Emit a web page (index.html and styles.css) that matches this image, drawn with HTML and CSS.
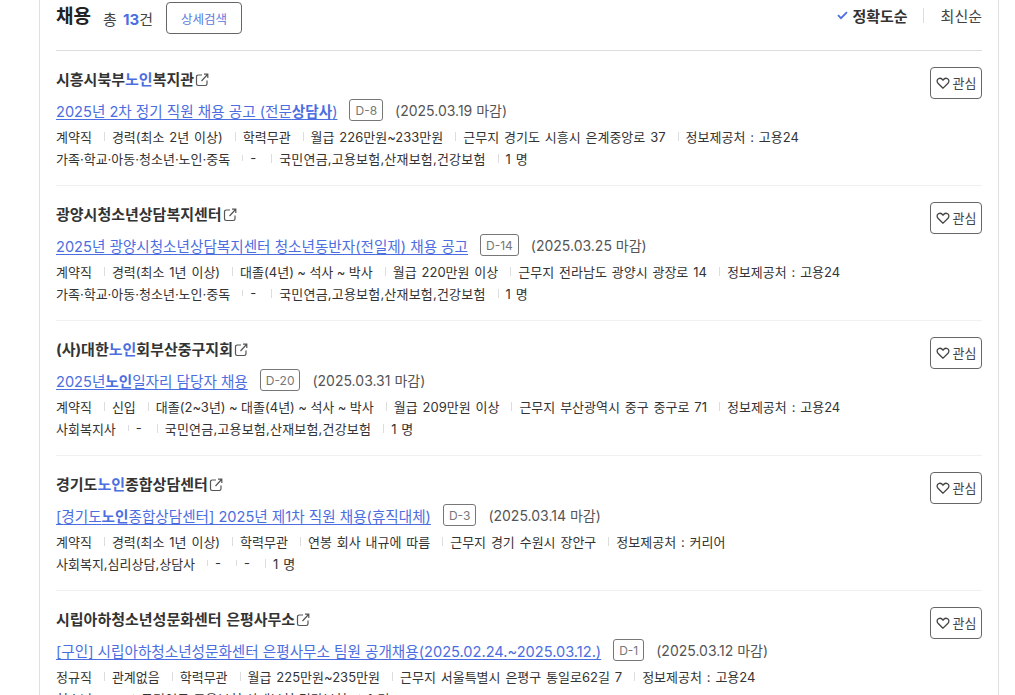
FILE: index.html
```html
<!DOCTYPE html>
<html lang="ko">
<head>
<meta charset="utf-8">
<title>채용</title>
<link rel="stylesheet" href="styles.css">
</head>
<body>
<svg class="defs" width="0" height="0" aria-hidden="true">
  <symbol id="ext" viewBox="0 0 14 14"><path d="M7 2H3.2A1.7 1.7 0 0 0 1.5 3.7v7.1a1.7 1.7 0 0 0 1.7 1.7h7.1a1.7 1.7 0 0 0 1.7-1.7V7.5" fill="none" stroke="currentColor" stroke-width="1.2"/><path d="M6.5 8 12.5 1.5M9 1.2h3.8V5" fill="none" stroke="currentColor" stroke-width="1.2"/></symbol>
  <symbol id="heart" viewBox="0 0 14 14"><path d="M7 12.2 2 7.3C.6 5.8.9 3.6 2.4 2.7c1.6-.9 3.4-.3 4.6 1.4 1.2-1.7 3-2.3 4.6-1.4 1.5.9 1.8 3.1.4 4.6z" fill="none" stroke="currentColor" stroke-width="1.3"/></symbol>
</svg>
<main class="panel">
  <header class="head">
    <div class="head-left">
      <h1 class="title">채용</h1>
      <span class="count">총 <b>13</b>건</span>
      <button class="search-btn">상세검색</button>
    </div>
    <div class="sort">
      <svg class="check" width="11" height="9" viewBox="0 0 11 9"><path d="M1 4.2 4 7.2 10 1.2" fill="none" stroke="#4c6ee0" stroke-width="1.8"/></svg>
      <span class="sort-on">정확도순</span>
      <span class="sort-off">최신순</span>
    </div>
  </header>

  <article class="job">
    <div class="job-main">
      <div class="org">시흥시북부<em>노인</em>복지관<svg class="ext"><use href="#ext"/></svg></div>
      <div class="line">
        <a class="job-link">2025년 2차 정기 직원 채용 공고 (전문<b>상담사</b>)</a>
        <span class="dday">D-8</span><span class="deadline">(2025.03.19 마감)</span>
      </div>
      <ul class="meta"><li>계약직</li><li>경력(최소 2년 이상)</li><li>학력무관</li><li>월급 226만원~233만원</li><li>근무지 경기도 시흥시 은계중앙로 37</li><li>정보제공처 : 고용24</li></ul>
      <ul class="meta"><li>가족·학교·아동·청소년·노인·중독</li><li class="dash">-</li><li class="benefits">국민연금,고용보험,산재보험,건강보험</li><li>1 명</li></ul>
    </div>
    <button class="fav"><svg class="heart"><use href="#heart"/></svg>관심</button>
  </article>

  <article class="job">
    <div class="job-main">
      <div class="org">광양시청소년상담복지센터<svg class="ext"><use href="#ext"/></svg></div>
      <div class="line">
        <a class="job-link">2025년 광양시청소년상담복지센터 청소년동반자(전일제) 채용 공고</a>
        <span class="dday">D-14</span><span class="deadline">(2025.03.25 마감)</span>
      </div>
      <ul class="meta"><li>계약직</li><li>경력(최소 1년 이상)</li><li class="edu">대졸(4년) ~ 석사 ~ 박사</li><li>월급 220만원 이상</li><li>근무지 전라남도 광양시 광장로 14</li><li>정보제공처 : 고용24</li></ul>
      <ul class="meta"><li>가족·학교·아동·청소년·노인·중독</li><li class="dash">-</li><li class="benefits">국민연금,고용보험,산재보험,건강보험</li><li>1 명</li></ul>
    </div>
    <button class="fav"><svg class="heart"><use href="#heart"/></svg>관심</button>
  </article>

  <article class="job">
    <div class="job-main">
      <div class="org">(사)대한<em>노인</em>회부산중구지회<svg class="ext"><use href="#ext"/></svg></div>
      <div class="line">
        <a class="job-link">2025년<b>노인</b>일자리 담당자 채용</a>
        <span class="dday">D-20</span><span class="deadline">(2025.03.31 마감)</span>
      </div>
      <ul class="meta"><li>계약직</li><li>신입</li><li class="edu">대졸(2~3년) ~ 대졸(4년) ~ 석사 ~ 박사</li><li>월급 209만원 이상</li><li>근무지 부산광역시 중구 중구로 71</li><li>정보제공처 : 고용24</li></ul>
      <ul class="meta"><li>사회복지사</li><li class="dash">-</li><li class="benefits">국민연금,고용보험,산재보험,건강보험</li><li>1 명</li></ul>
    </div>
    <button class="fav"><svg class="heart"><use href="#heart"/></svg>관심</button>
  </article>

  <article class="job">
    <div class="job-main">
      <div class="org">경기도<em>노인</em>종합상담센터<svg class="ext"><use href="#ext"/></svg></div>
      <div class="line">
        <a class="job-link">[경기도<b>노인</b>종합상담센터] 2025년 제1차 직원 채용(휴직대체)</a>
        <span class="dday">D-3</span><span class="deadline">(2025.03.14 마감)</span>
      </div>
      <ul class="meta"><li>계약직</li><li>경력(최소 1년 이상)</li><li>학력무관</li><li>연봉 회사 내규에 따름</li><li>근무지 경기 수원시 장안구</li><li>정보제공처 : 커리어</li></ul>
      <ul class="meta"><li>사회복지,심리상담,상담사</li><li class="dash">-</li><li class="dash">-</li><li>1 명</li></ul>
    </div>
    <button class="fav"><svg class="heart"><use href="#heart"/></svg>관심</button>
  </article>

  <article class="job">
    <div class="job-main">
      <div class="org">시립아하청소년성문화센터 은평사무소<svg class="ext"><use href="#ext"/></svg></div>
      <div class="line">
        <a class="job-link">[구인] 시립아하청소년성문화센터 은평사무소 팀원 공개채용(2025.02.24.~2025.03.12.)</a>
        <span class="dday">D-1</span><span class="deadline">(2025.03.12 마감)</span>
      </div>
      <ul class="meta"><li>정규직</li><li>관계없음</li><li>학력무관</li><li>월급 225만원~235만원</li><li>근무지 서울특별시 은평구 통일로62길 7</li><li>정보제공처 : 고용24</li></ul>
      <ul class="meta"><li>청소년</li><li class="dash">-</li><li class="benefits">국민연금,고용보험,산재보험,건강보험</li><li>1 명</li></ul>
    </div>
    <button class="fav"><svg class="heart"><use href="#heart"/></svg>관심</button>
  </article>
</main>
</body>
</html>
```
FILE: styles.css
```css
* { box-sizing: border-box; }
html, body { margin: 0; height: 695px; overflow: hidden; background: #fff; }
body {
  font-family: Inter, "Noto Sans CJK KR", sans-serif;
  color: #333;
  font-size: 13px;
}
.defs { position: absolute; }
ul { list-style: none; margin: 0; padding: 0; }

.panel {
  width: 960px;
  margin-left: 39px;
  padding: 0 16px;
  height: 695px;
  border-left: 1px solid #e0e0e0;
  border-right: 1px solid #e0e0e0;
}

.head {
  height: 51px;
  display: flex;
  justify-content: space-between;
  align-items: flex-start;
  border-bottom: 1px solid #ddd;
}
.head-left { display: flex; align-items: center; height: 36px; }
.title { margin: 0 0 2px; font-size: 19px; font-weight: 700; color: #222; line-height: 30px; }
.count { margin-left: 12px; font-size: 15px; word-spacing: 2px; color: #444; }
.count b { color: #4c6ee0; font-weight: 700; }
.search-btn {
  margin-left: 13px;
  width: 76px;
  height: 32px;
  border: 1px solid #666;
  border-radius: 4px;
  background: #fff;
  color: #5a78e0;
  font: 12.5px Inter, "Noto Sans CJK KR", sans-serif;
  padding: 0;
}
.sort { display: flex; align-items: center; height: 30px; font-size: 15px; }
.check { margin-right: 4px; }
.sort-on { font-weight: 700; color: #333; }
.sort-off { margin-left: 15px; padding-left: 18px; color: #444; position: relative; }
.sort-off::before {
  content: ""; position: absolute; left: 0; top: 3px; bottom: 3px; width: 1px; background: #ddd;
}

.job {
  height: 135px;
  padding-top: 16px;
  display: flex;
  justify-content: space-between;
  align-items: flex-start;
  border-bottom: 1px solid #f0f0f0;
}
.job-main { min-width: 0; }
.org { font-size: 15px; font-weight: 700; color: #333; height: 26px; line-height: 26px; display: flex; align-items: center; word-spacing: 1px; }
.org em { font-style: normal; color: #4c6ee0; }
.ext { width: 14px; height: 14px; margin-left: 1px; color: #555; }

.line { display: flex; align-items: center; height: 30px; margin-top: 2px; white-space: nowrap; }
.job-link { font-size: 14.6px; color: #4c6ee0; text-decoration: underline; text-underline-offset: 2px; }
.job-link b { font-weight: 700; }
.dday {
  margin-left: 12px;
  height: 22px;
  padding: 0 5px;
  display: inline-flex;
  align-items: center;
  border: 1px solid #777;
  border-radius: 3px;
  font-size: 12px;
  color: #777;
}
.deadline { margin-left: 12px; font-size: 14px; color: #555; }

.meta { display: flex; align-items: center; height: 22px; white-space: nowrap; font-size: 13px; word-spacing: 1.2px; color: #333; }
.meta li + li { margin-left: 12px; padding-left: 8px; position: relative; }
.meta li + li::before {
  content: ""; position: absolute; left: 0; top: 5px; bottom: 5px; width: 1px; background: #ddd;
}
.meta li.dash { padding-right: 3px; }
.meta li.edu { word-spacing: -0.2px; }
.meta li.benefits { letter-spacing: 0.2px; }

.fav {
  flex: none;
  width: 52px;
  height: 32px;
  display: flex;
  align-items: center;
  justify-content: center;
  gap: 3px;
  padding: 0 0 1px;
  border: 1px solid #666;
  border-radius: 4px;
  background: #fff;
  color: #444;
  font: 13px Inter, "Noto Sans CJK KR", sans-serif;
}
.heart { width: 14px; height: 14px; color: #444; }
```
